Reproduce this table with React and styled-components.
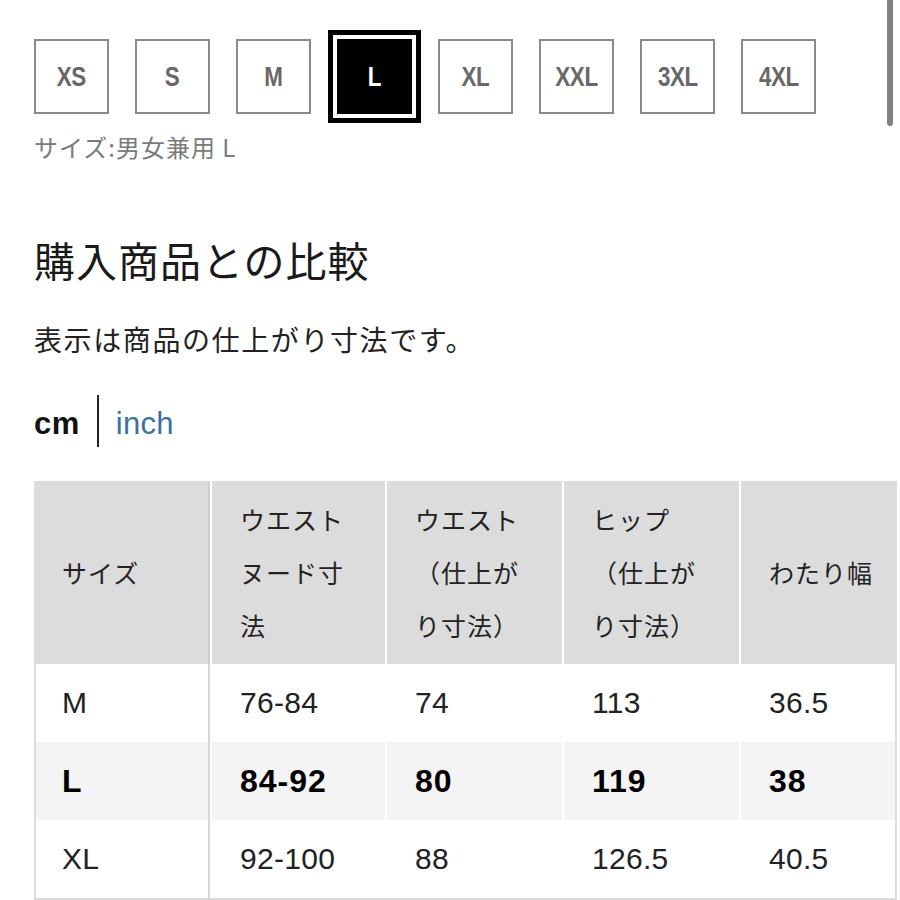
import React from 'react';
import styled, { createGlobalStyle } from 'styled-components';

const GlobalStyle = createGlobalStyle`
  html, body {
    margin: 0;
    padding: 0;
    background: #fff;
    overflow: hidden;
  }
  body {
    font-family: "Liberation Sans", "Noto Sans CJK JP", sans-serif;
    color: #222;
  }
`;

const Page = styled.div`
  position: relative;
  width: 900px;
  height: 900px;
  padding-left: 34px;
  box-sizing: border-box;
`;

const ScrollThumb = styled.div`
  position: absolute;
  top: 0;
  right: 7px;
  width: 6px;
  height: 126px;
  background: #828282;
  border-radius: 0 0 3px 3px;
`;

const SizeRow = styled.div`
  display: flex;
  gap: 26px;
  padding-top: 39px;
`;

const SizeBox = styled.div`
  width: 75px;
  height: 75px;
  box-sizing: border-box;
  display: flex;
  align-items: center;
  justify-content: center;
  border: 2px solid ${p => (p.selected ? '#000' : '#8a8a8a')};
  background: ${p => (p.selected ? '#000' : '#fff')};
  color: ${p => (p.selected ? '#fff' : '#686868')};
  box-shadow: ${p => (p.selected ? '0 0 0 4px #fff, 0 0 0 9px #000' : 'none')};
`;

const SizeLabel = styled.span`
  display: inline-block;
  font-family: "Liberation Sans", sans-serif;
  font-weight: 700;
  font-size: 28px;
  line-height: 1;
  transform: scaleX(0.8);
  letter-spacing: -0.5px;
`;

const SizeCaption = styled.div`
  margin-top: 18px;
  font-family: "Noto Sans CJK JP", sans-serif;
  font-size: 24px;
  line-height: 30px;
  letter-spacing: 1px;
  color: #7a7a7a;
`;

const Heading = styled.h2`
  margin: 73px 0 0;
  font-family: "Noto Sans CJK JP", sans-serif;
  font-weight: 400;
  font-size: 41px;
  line-height: 48px;
  letter-spacing: 1px;
  color: #1a1a1a;
`;

const Note = styled.p`
  margin: 38px 0 0;
  font-family: "Noto Sans CJK JP", sans-serif;
  font-size: 28px;
  line-height: 36px;
  letter-spacing: 1.6px;
  color: #222;
`;

const UnitRow = styled.div`
  display: flex;
  align-items: center;
  gap: 17px;
  height: 52px;
  margin-top: 38px;
  font-family: "Liberation Sans", sans-serif;
  font-size: 31px;
`;

const Unit = styled.span`
  padding-top: 6px;
  font-weight: ${p => (p.active ? 700 : 400)};
  color: ${p => (p.active ? '#111' : '#3d6fa6')};
  letter-spacing: ${p => (p.active ? 0.5 : 0.3)}px;
`;

const UnitDivider = styled.span`
  width: 2px;
  align-self: stretch;
  background: #222;
`;

const Table = styled.table`
  margin-top: 34px;
  width: 863px;
  table-layout: fixed;
  border-collapse: separate;
  border-spacing: 0;
  border-left: 2px solid #dcdcdc;
  border-right: 2px solid #dcdcdc;
  border-bottom: 2px solid #dcdcdc;
`;

const HeadCell = styled.th`
  height: 183px;
  box-sizing: border-box;
  padding: 0 0 0 ${p => (p.first ? 26 : 28)}px;
  background: #dcdcdc;
  text-align: left;
  vertical-align: middle;
  font-family: "Noto Sans CJK JP", sans-serif;
  font-weight: 400;
  font-size: 25px;
  line-height: 53px;
  letter-spacing: 1px;
  color: #222;
  border-left: ${p => (p.first ? 'none' : '2px solid #fff')};
  border-right: ${p => (p.first ? '2px solid #cfcfcf' : 'none')};
`;

const BodyCell = styled.td`
  height: 78px;
  box-sizing: border-box;
  padding: 0 0 0 ${p => (p.first ? 26 : 28)}px;
  background: ${p => (p.highlight ? '#f4f4f4' : '#fff')};
  vertical-align: middle;
  font-family: "Liberation Sans", "Noto Sans CJK JP", sans-serif;
  font-weight: ${p => (p.highlight ? 700 : 400)};
  font-size: ${p => (p.highlight ? 32 : 30)}px;
  letter-spacing: ${p => (p.highlight ? 1 : 0.3)}px;
  color: ${p => (p.highlight ? '#000' : '#222')};
  border-left: ${p => (p.first ? 'none' : '2px solid #fff')};
  border-right: ${p => (p.first ? '2px solid #d6d6d6' : 'none')};
`;

const sizes = ['XS', 'S', 'M', 'L', 'XL', 'XXL', '3XL', '4XL'];

const columns = [
  { width: 174, lines: ['サイズ'] },
  { width: 175, lines: ['ウエスト', 'ヌード寸', '法'] },
  { width: 177, lines: ['ウエスト', '（仕上が', 'り寸法）'] },
  { width: 177, lines: ['ヒップ', '（仕上が', 'り寸法）'] },
  { width: 156, lines: ['わたり幅'] }
];

const rows = [
  { size: 'M', values: ['76-84', '74', '113', '36.5'] },
  { size: 'L', values: ['84-92', '80', '119', '38'], highlight: true },
  { size: 'XL', values: ['92-100', '88', '126.5', '40.5'] }
];

export default function App() {
  return (
    <Page>
      <GlobalStyle />
      <ScrollThumb />
      <SizeRow>
        {sizes.map(s => (
          <SizeBox key={s} selected={s === 'L'}>
            <SizeLabel>{s}</SizeLabel>
          </SizeBox>
        ))}
      </SizeRow>
      <SizeCaption>サイズ:男女兼用 L</SizeCaption>

      <Heading>購入商品との比較</Heading>
      <Note>表示は商品の仕上がり寸法です。</Note>

      <UnitRow>
        <Unit active>cm</Unit>
        <UnitDivider />
        <Unit>inch</Unit>
      </UnitRow>

      <Table>
        <colgroup>
          {columns.map((c, i) => (
            <col key={i} style={{ width: c.width }} />
          ))}
        </colgroup>
        <thead>
          <tr>
            {columns.map((c, i) => (
              <HeadCell key={i} first={i === 0}>
                {c.lines.map((line, j) => (
                  <React.Fragment key={j}>
                    {j > 0 && <br />}
                    {line}
                  </React.Fragment>
                ))}
              </HeadCell>
            ))}
          </tr>
        </thead>
        <tbody>
          {rows.map(r => (
            <tr key={r.size}>
              <BodyCell first highlight={r.highlight}>{r.size}</BodyCell>
              {r.values.map((v, i) => (
                <BodyCell key={i} highlight={r.highlight}>{v}</BodyCell>
              ))}
            </tr>
          ))}
        </tbody>
      </Table>
    </Page>
  );
}
